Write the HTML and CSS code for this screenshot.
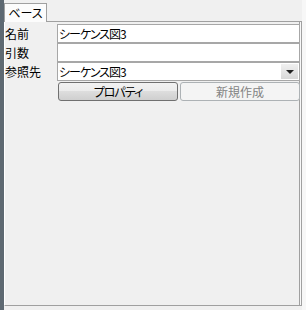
FILE: index.html
```html
<!DOCTYPE html>
<html lang="ja">
<head>
  <meta charset="UTF-8">
  <title>ベース</title>
  <link rel="stylesheet" href="styles.css">
</head>
<body>
<div class="window">
  <!-- 左端の枠 -->
  <div class="edge"></div>

  <div class="pane">
    <!-- タブ -->
    <div class="tab-strip">
      <div class="tab">ベース</div>
    </div>

    <!-- タブの中身 -->
    <div class="panel">
      <div class="form">
        <label class="label">名前</label>
        <input class="field" type="text" value="シーケンス図3">

        <label class="label">引数</label>
        <input class="field" type="text" value="">

        <label class="label">参照先</label>
        <div class="combo">
          <span class="combo-text">シーケンス図3</span>
          <span class="combo-arrow"></span>
        </div>

        <div class="buttons">
          <button class="btn">プロパティ</button>
          <button class="btn" disabled>新規作成</button>
        </div>
      </div>
    </div>
  </div>

  <div class="right-edge"></div>
</div>
</body>
</html>
```

FILE: styles.css
```css
body, html {
  margin: 0;
  padding: 0;
  background: #f0f0f0;
  font-family: "Noto Sans CJK JP", sans-serif;
  font-size: 12px;
  font-feature-settings: "palt";
  color: #000;
}

.window {
  display: flex;
  width: 306px;
  height: 310px;
}

.edge {
  width: 4px;
  background: #5e6972;
}

.pane {
  width: 298px;
  display: flex;
  flex-direction: column;
}

.right-edge {
  width: 4px;
  background: #f7f7f7;
}

.tab-strip {
  height: 21px;
  display: flex;
  align-items: flex-end;
}

.tab {
  width: 41px;
  height: 18px;
  border: 1px solid #a0a0a0;
  border-bottom: none;
  background: #fcfcfc;
  text-align: center;
  line-height: 18px;
  margin-bottom: -1px;
  position: relative;
}

.panel {
  height: 281px;
  border: 1px solid #a0a0a0;
  border-left-color: #ffffff;
  box-shadow: inset -1px 0 0 #f8f8f8, inset -2px 0 0 #a0a0a0;
  background: #f0f0f0;
  padding-top: 2px;
}

.form {
  display: grid;
  grid-template-columns: 52px 243px;
}

.label {
  line-height: 19px;
  padding-left: 0;
}

.field, .combo {
  box-sizing: border-box;
  height: 19px;
  margin: 0;
  border: 1px solid #a7a7a7;
  background: #fff;
  font: inherit;
  font-feature-settings: "palt";
  letter-spacing: -1px;
  padding: 0 1px;
  outline: none;
}

.combo {
  display: flex;
  align-items: center;
  justify-content: space-between;
  padding-right: 0;
}

.combo-text {
  line-height: 17px;
}

.combo-arrow {
  width: 17px;
  height: 15px;
  margin-right: 1px;
  background: linear-gradient(#f0f0f0, #d8d8d8);
  position: relative;
}

.combo-arrow::after {
  content: "";
  position: absolute;
  left: 5px;
  top: 6px;
  border-left: 4px solid transparent;
  border-right: 4px solid transparent;
  border-top: 4px solid #222;
}

.buttons {
  grid-column: 2;
  display: flex;
  gap: 2px;
  margin-top: 1px;
  padding-left: 1px;
}

.btn {
  width: 120px;
  height: 19px;
  padding: 0;
  border: 1px solid #707070;
  border-radius: 3px;
  background: linear-gradient(#f2f2f2 0%, #ebebeb 50%, #dddddd 50%, #cfcfcf 100%);
  font: inherit;
  font-feature-settings: "palt";
  letter-spacing: -1px;
  color: #000;
  line-height: 17px;
}

.btn:disabled {
  border-color: #adb2b5;
  background: #f4f4f4;
  color: #838383;
  letter-spacing: 0;
}
```
